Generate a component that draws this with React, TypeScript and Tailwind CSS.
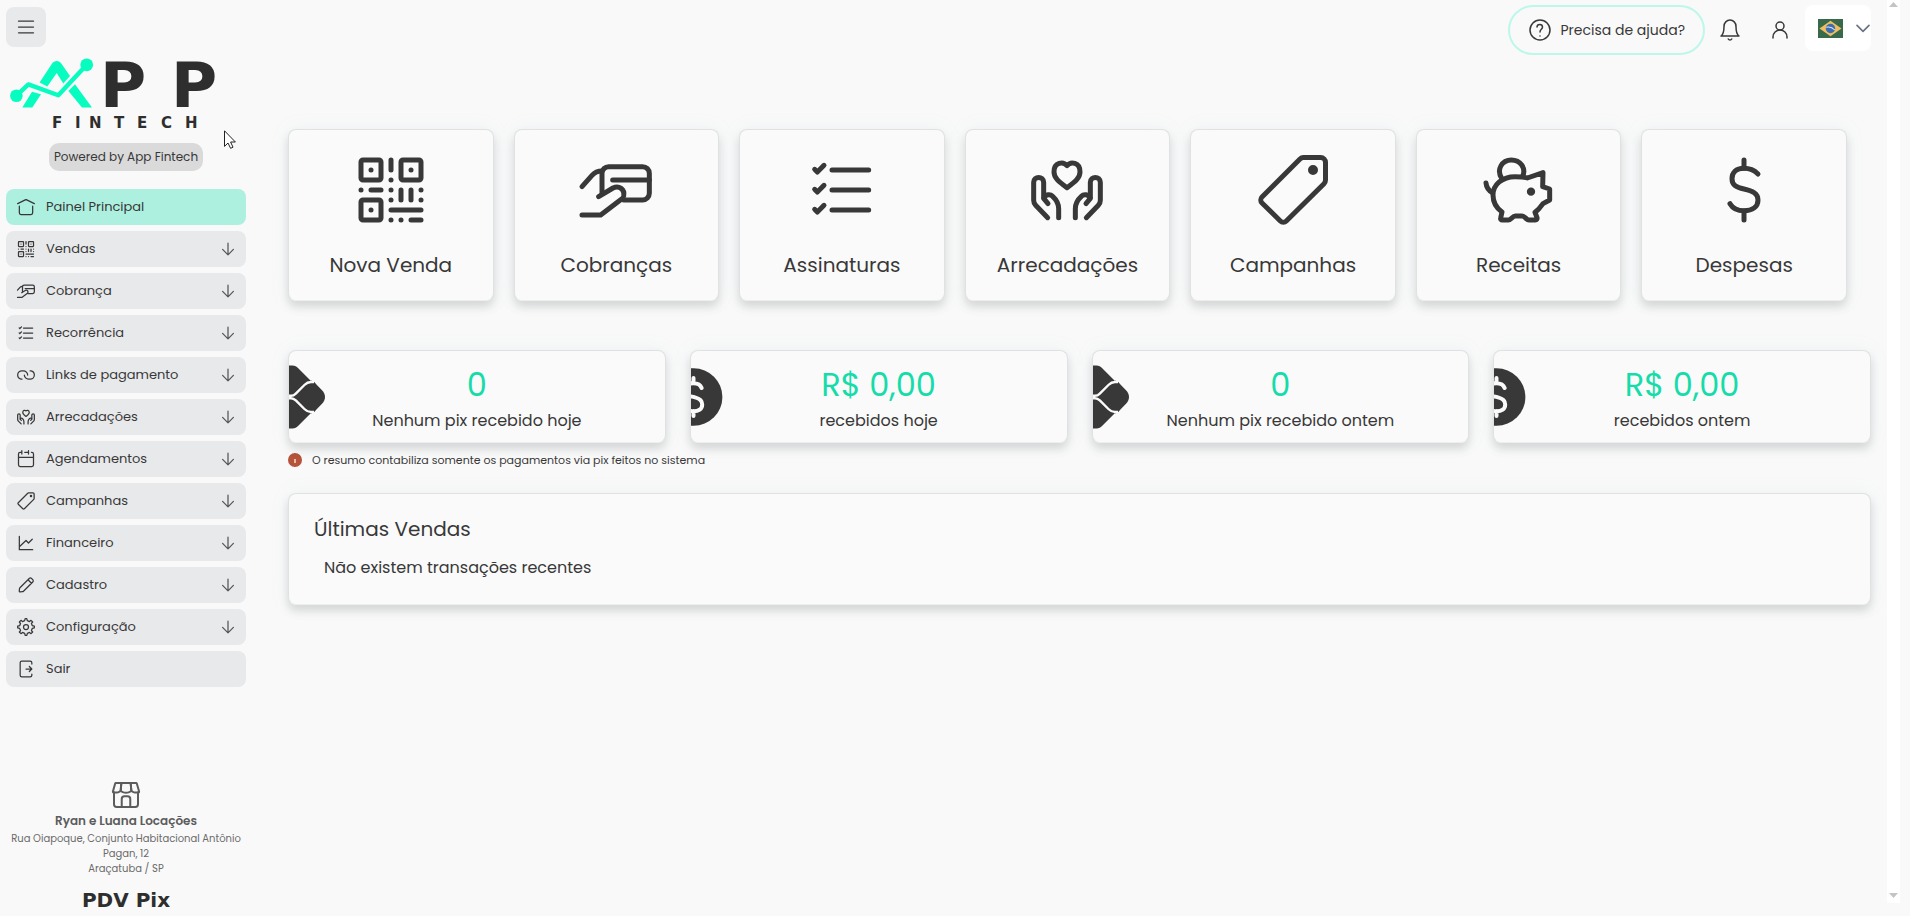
import type { ReactNode } from "react";

type IconProps = { className?: string };

function Svg({ className = "size-5", children }: IconProps & { children: ReactNode }) {
  return (
    <svg
      viewBox="0 0 24 24"
      fill="none"
      stroke="currentColor"
      strokeWidth="1.5"
      strokeLinecap="round"
      strokeLinejoin="round"
      aria-hidden="true"
      className={`shrink-0 ${className}`}
    >
      {children}
    </svg>
  );
}

const HomeIcon = ({ className }: IconProps) => (
  <Svg className={className}>
    <path d="M2 8L11.73 3.13C11.9 3.05 12.1 3.05 12.27 3.13L22 8" />
    <path d="M20 11V19C20 20.1 19.1 21 18 21H6C4.9 21 4 20.1 4 19V11" />
  </Svg>
);

const QrIcon = ({ className }: IconProps) => (
  <Svg className={className}>
    <rect x="3" y="3" width="6" height="6" rx="0.6" />
    <rect x="15" y="3" width="6" height="6" rx="0.6" />
    <rect x="3" y="15" width="6" height="6" rx="0.6" />
    <path d="M12 3V6M6 12H9M15 12V15M18 12V15M12 18H21M18 21H21" />
    <path d="M6 6H6.01M18 6H18.01M6 18H6.01M12 9H12.01M3 12H3.01M12 12H12.01M21 12H21.01M12 15H12.01M21 15H21.01M12 21H12.01M15 21H15.01" />
  </Svg>
);

const HandCardIcon = ({ className }: IconProps) => (
  <Svg className={className}>
    <path d="M1.8 11L4.8 7.6C5.6 6.7 6.6 6.3 7.8 6.3" />
    <path d="M7.8 13V7C7.8 5.9 8.7 5 9.8 5H20C21.1 5 22 5.9 22 7V13C22 14.1 21.1 15 20 15H14.3" />
    <path d="M11 9H22" />
    <path d="M6.8 14L11.1 11.4C12.9 10.5 14.7 11.8 14.3 13.8C14.2 14.2 14 14.5 13.7 14.7L7.4 19.5H1.8" />
  </Svg>
);

const ListCheckIcon = ({ className }: IconProps) => (
  <Svg className={className}>
    <path d="M9 6H20M9 12H20M9 18H20" />
    <path d="M3.8 5.8L4.6 6.6L6.6 4.6M3.8 11.8L4.6 12.6L6.6 10.6M3.8 17.8L4.6 18.6L6.6 16.6" />
  </Svg>
);

const LinkIcon = ({ className }: IconProps) => (
  <Svg className={className}>
    <path d="M14 12C14 9.5 11.68 7 8.86 7H7.14C4.3 7 2 9.24 2 12C2 14.38 3.71 16.37 6 16.87C6.37 16.95 6.75 17 7.14 17" />
    <path d="M10 12C10 14.49 12.32 17 15.14 17H16.86C19.7 17 22 14.76 22 12C22 9.62 20.29 7.63 18 7.12C17.63 7.04 17.25 7 16.86 7" />
  </Svg>
);

const DonateIcon = ({ className }: IconProps) => (
  <Svg className={className}>
    <path d="M12 4.7C10.9 3.4 8.1 3.6 8.1 6.6C8.1 8.3 9.4 9.4 12 11.3C14.6 9.4 15.9 8.3 15.9 6.6C15.9 3.6 13.1 3.4 12 4.7Z" />
    <path d="M6.2 20.3L2.6 16.6C2.2 16.2 2 15.8 2 15.1V9.7C2 7.8 5 7.8 5 9.7V14.5L6.3 16.1" />
    <path d="M5.1 14.4C5.7 13.3 6.9 13.1 7.7 13.9C9 15.1 9.5 16.2 9.5 17.6V20.3" />
    <path d="M17.8 20.3L21.4 16.6C21.8 16.2 22 15.8 22 15.1V9.7C22 7.8 19 7.8 19 9.7V14.5L17.7 16.1" />
    <path d="M18.9 14.4C18.3 13.3 17.1 13.1 16.3 13.9C15 15.1 14.5 16.2 14.5 17.6V20.3" />
  </Svg>
);

const CalendarIcon = ({ className }: IconProps) => (
  <Svg className={className}>
    <path d="M15 2V6M15 4H10.5M3 10V19C3 20.1 3.9 21 5 21H19C20.1 21 21 20.1 21 19V10H3Z" />
    <path d="M3 10V6C3 4.9 3.9 4 5 4H7M7 2V6M21 10V6C21 4.9 20.1 4 19 4H18.5" />
  </Svg>
);

const TagIcon = ({ className }: IconProps) => (
  <Svg className={className}>
    <path d="M2.7 14.1L14.1 2.7C14.4 2.4 14.7 2.25 15.1 2.25H20.3C21.1 2.25 21.75 2.9 21.75 3.7V9C21.75 9.4 21.6 9.8 21.3 10.1L10 21.3C9.5 21.8 8.7 21.8 8.2 21.3L2.7 15.9C2.2 15.4 2.2 14.6 2.7 14.1Z" />
    <circle cx="18" cy="6" r="0.75" fill="currentColor" />
  </Svg>
);

const GraphIcon = ({ className }: IconProps) => (
  <Svg className={className}>
    <path d="M20 20H4V4M4 16.5L12 9L15 12L19.5 7.5" />
  </Svg>
);

const PencilIcon = ({ className }: IconProps) => (
  <Svg className={className}>
    <path d="M14.36 5.65L15.84 4.17C16.62 3.39 17.89 3.39 18.67 4.17L20.09 5.59C20.87 6.37 20.87 7.63 20.09 8.41L18.61 9.89M14.36 5.65L4.75 15.27C4.42 15.6 4.21 16.04 4.17 16.51L3.93 19.25C3.87 19.87 4.39 20.38 5.01 20.33L7.75 20.09C8.22 20.05 8.66 19.84 8.99 19.51L18.61 9.89M14.36 5.65L18.61 9.89" />
  </Svg>
);

const GearIcon = ({ className }: IconProps) => (
  <Svg className={className}>
    <circle cx="12" cy="12" r="3" />
    <path d="M19.62 10.4L18.52 7.74L20 6L18 4L16.26 5.48L13.56 4.37L12.94 2H10.98L10.35 4.4L7.7 5.52L6 4L4 6L5.45 7.79L4.37 10.45L2 11V13L4.4 13.66L5.52 16.3L4 18L6 20L7.79 18.54L10.4 19.61L11 22H13L13.6 19.61L16.26 18.52C16.7 18.83 18 20 18 20L20 18L18.52 16.25L19.61 13.6L22 12.98V11L19.62 10.4Z" />
  </Svg>
);

const ExitIcon = ({ className }: IconProps) => (
  <Svg className={className}>
    <path d="M19 6V4.5C19 3.4 18.1 2.5 17 2.5H7C5.9 2.5 5 3.4 5 4.5V19.5C5 20.6 5.9 21.5 7 21.5H17C18.1 21.5 19 20.6 19 19.5V18" />
    <path d="M12 12H19M16 9L19 12L16 15" />
  </Svg>
);

const PigIcon = ({ className }: IconProps) => (
  <Svg className={className}>
    <path d="M6.9 8.7C5 5.8 7 3 9.7 3C12.4 3 14.2 5.4 13.1 7.9" />
    <path d="M14.5 8.4L19.2 6.8L19.1 11L21.2 11.7V15L19.2 16.1C18.5 17.1 17.8 18 16.8 18.7L17.4 20.3C17.5 20.7 17.3 21 16.9 21H15C14.2 21 13.8 19.8 12.9 19.8H10.9C10 19.8 9.7 21 8.8 21H7C6.6 21 6.4 20.7 6.5 20.4L6.9 18.6C5.2 17.4 4.2 15.7 4.2 13.5C4.2 10.4 7 8 10.8 8C12.2 8 13.3 8 14.5 8.4Z" />
    <path d="M2.1 9.9C2.2 11 2.7 12 4 12.8" />
    <circle cx="15.6" cy="12.5" r="0.5" fill="currentColor" />
  </Svg>
);

const DollarIcon = ({ className }: IconProps) => (
  <Svg className={className}>
    <path d="M16.2 7.2C15.2 6.2 13.8 5.5 12 5.5C9.5 5.5 8.4 6.9 8.4 8.6C8.4 10.6 9.8 11.2 12 11.7C14.6 12.3 16.2 13 16.2 15C16.2 17 14.6 18.2 12 18.2C10 18.2 8.6 17.5 7.8 16.1" />
    <path d="M12 3V5.5M12 18.3V21" />
  </Svg>
);

const ShopIcon = ({ className }: IconProps) => (
  <Svg className={className}>
    <path d="M3 10V19C3 20.1 3.9 21 5 21H19C20.1 21 21 20.1 21 19V10" />
    <path d="M15.2 21V15C15.2 13.9 14.3 13 13.2 13H10.8C9.7 13 8.8 13.9 8.8 15V21" />
    <path d="M21.82 9.36L20.12 3.44C20.05 3.18 19.82 3 19.55 3H15.5L15.98 8.7C15.99 8.89 16.09 9.06 16.25 9.15C16.64 9.39 17.41 9.82 18 10C19.02 10.31 20.5 10.2 21.35 10.1C21.7 10.05 21.92 9.7 21.82 9.36Z" />
    <path d="M14 10C14.57 9.83 15.29 9.43 15.69 9.19C15.88 9.07 15.99 8.86 15.97 8.64L15.5 3H8.5L8.03 8.64C8.01 8.86 8.12 9.07 8.31 9.19C8.71 9.43 9.43 9.83 10 10C11.49 10.46 12.51 10.46 14 10Z" />
    <path d="M3.88 3.44L2.18 9.36C2.08 9.7 2.3 10.05 2.65 10.1C3.5 10.2 4.98 10.31 6 10C6.59 9.82 7.36 9.39 7.75 9.15C7.91 9.06 8.01 8.89 8.02 8.7L8.5 3H4.45C4.18 3 3.95 3.18 3.88 3.44Z" />
  </Svg>
);

const ArrowDownIcon = ({ className }: IconProps) => (
  <Svg className={className}>
    <path d="M12 5V19M5.5 12.5L12 19L18.5 12.5" />
  </Svg>
);

function Logo() {
  return (
    <svg
      viewBox="0 0 232 72"
      role="img"
      aria-label="APP Fintech"
      className="mx-1 h-[72px] overflow-visible font-['DejaVu_Sans',sans-serif]"
    >
      <g fill="#07fdc0">
        <circle cx="6.4" cy="37.7" r="6.3" />
        <circle cx="76.7" cy="6.8" r="6.4" />
        <path d="M29.6 24.5L41.6 6.2C44.4 2 49 2 51.8 6.2L60 18L53.3 25.4L46.7 15L37.3 28.4Z" />
        <path d="M22 33.7L31 36.3L22.3 49.5H12.3Z" />
        <path d="M58.4 33L65 26.2L82 49.5H72Z" />
        <path
          d="M6.4 37.7L18.4 26.4L48.3 37.3L76.7 6.8"
          fill="none"
          stroke="#07fdc0"
          strokeWidth="4.4"
          strokeLinejoin="round"
        />
      </g>
      <text x="90 161" y="49" fontSize="63" fontWeight="700" fill="#2e2e2e">
        PP
      </text>
      <text x="42 65 79 104 127 151 175" y="70" fontSize="15" fontWeight="700" fill="#2e2e2e">
        FINTECH
      </text>
    </svg>
  );
}

function PixMark() {
  return (
    <svg viewBox="0 0 36 64" aria-hidden="true" className="h-16 w-9">
      <path
        d="M0 0.5H3.5C6 0.5 7.6 1.5 9 2.9L22 16H24.5L32.4 27.4C35.6 30.6 35.6 33.4 32.4 36.6L24.5 48H22L9 61.1C7.6 62.5 6 63.5 3.5 63.5H0Z"
        fill="#383838"
      />
      <path d="M22 15.2L23.4 16.6C24.4 16.8 25.3 17.4 26 18.1L33 25.2C37 29.4 37 34.6 33 38.8L26 45.9C25.3 46.6 24.4 47.2 23.4 47.4L22 48.8Z" fill="#383838" />
      <path
        d="M0 30.8H2C4.2 30.8 5.4 30 6.8 28.6L15.4 20C17.6 17.8 19 17 22 17H25M0 33.2H2C4.2 33.2 5.4 34 6.8 35.4L15.4 44C17.6 46.2 19 47 22 47H25"
        fill="none"
        stroke="#fafafa"
        strokeWidth="2.4"
      />
    </svg>
  );
}

function CoinMark() {
  return (
    <svg viewBox="0 0 36 64" aria-hidden="true" className="h-16 w-9">
      <circle cx="2.6" cy="32" r="28.8" fill="#383838" />
      <path
        d="M10.6 23C9.4 19.4 6.4 18.2 2.5 18.2C-3 18.2-6 20.5-6 24.5C-6 33-1 30.5 4 32.4C8.8 33.6 11.2 35.4 11.2 39.4C11.2 44 7.6 46.2 2.5 46.2C-2 46.2-6 44-6 40M2.5 13V18M2.5 46V51"
        fill="none"
        stroke="#fafafa"
        strokeWidth="4"
        strokeLinecap="round"
      />
    </svg>
  );
}

function BrazilFlag() {
  return (
    <svg viewBox="0 0 25 19" aria-hidden="true" className="h-[19px] w-[25px]">
      <rect width="25" height="19" fill="#37694a" />
      <path d="M12.5 1.8L23.5 9.5L12.5 17.2L1.5 9.5Z" fill="#f0bd62" />
      <circle cx="12.5" cy="9.5" r="4.7" fill="#3c6db0" />
      <path d="M8.2 8.2C11.2 7.5 14.6 8.6 16.8 11" fill="none" stroke="#dfe8f0" strokeWidth="1.1" />
    </svg>
  );
}

const menu = [
  { label: "Painel Principal", icon: HomeIcon, active: true, expandable: false },
  { label: "Vendas", icon: QrIcon, expandable: true },
  { label: "Cobrança", icon: HandCardIcon, expandable: true },
  { label: "Recorrência", icon: ListCheckIcon, expandable: true },
  { label: "Links de pagamento", icon: LinkIcon, expandable: true },
  { label: "Arrecadações", icon: DonateIcon, expandable: true },
  { label: "Agendamentos", icon: CalendarIcon, expandable: true },
  { label: "Campanhas", icon: TagIcon, expandable: true },
  { label: "Financeiro", icon: GraphIcon, expandable: true },
  { label: "Cadastro", icon: PencilIcon, expandable: true },
  { label: "Configuração", icon: GearIcon, expandable: true },
  { label: "Sair", icon: ExitIcon, expandable: false },
];

const shortcuts = [
  { label: "Nova Venda", icon: QrIcon },
  { label: "Cobranças", icon: HandCardIcon },
  { label: "Assinaturas", icon: ListCheckIcon },
  { label: "Arrecadações", icon: DonateIcon },
  { label: "Campanhas", icon: TagIcon },
  { label: "Receitas", icon: PigIcon },
  { label: "Despesas", icon: DollarIcon },
];

const stats = [
  { value: "0", label: "Nenhum pix recebido hoje", mark: PixMark },
  { value: "R$ 0,00", label: "recebidos hoje", mark: CoinMark },
  { value: "0", label: "Nenhum pix recebido ontem", mark: PixMark },
  { value: "R$ 0,00", label: "recebidos ontem", mark: CoinMark },
];

function Sidebar() {
  return (
    <aside className="flex w-[246px] shrink-0 flex-col pt-[7px] pl-[6px]">
      <button
        type="button"
        aria-label="Menu"
        className="flex size-10 items-center justify-center rounded-lg bg-[#e8e9eb]"
      >
        <Svg>
          <path d="M3 5H21M3 12H21M3 19H21" />
        </Svg>
      </button>

      <div className="mt-[11px] flex flex-col items-center">
        <Logo />
        <p className="mt-[13px] rounded-[10px] bg-[#dadada] px-[5px] text-xs leading-7">
          Powered by App Fintech
        </p>
      </div>

      <nav className="mt-[18px] flex flex-col gap-1.5">
        {menu.map(({ label, icon: Icon, active, expandable }) => (
          <a
            key={label}
            href="#"
            className={`flex h-9 items-center rounded-lg pr-2 pl-2.5 text-[13px] ${
              active ? "bg-[#adf0df]" : "bg-[#e8e9eb]"
            }`}
          >
            <Icon />
            <span className="ml-2.5 flex-1">{label}</span>
            {expandable && <ArrowDownIcon className="size-5 text-[#555]" />}
          </a>
        ))}
      </nav>

      <div className="mt-auto flex flex-col items-center pb-1 text-center text-[#5c5c5c]">
        <ShopIcon className="size-8" />
        <p className="text-xs leading-5 font-semibold">Ryan e Luana Locações</p>
        <address className="text-[10px] leading-[15px] text-[#6a6a6a] not-italic">
          Rua Oiapoque, Conjunto Habitacional Antônio Pagan, 12
          <br />
          Araçatuba / SP
        </address>
        <p className="mt-3 font-['DejaVu_Sans',sans-serif] text-xl leading-6 font-bold text-[#2e2e2e]">
          PDV Pix
        </p>
      </div>
    </aside>
  );
}

function Header() {
  return (
    <header className="flex justify-end pt-[5px]">
      <button
        type="button"
        className="flex h-[50px] items-center gap-2 rounded-full border-2 border-[#bdf7ea] px-[18px] text-sm"
      >
        <Svg className="size-6">
          <circle cx="12" cy="12" r="10" />
          <path d="M9 9C9 5.5 14.5 5.5 14.5 9C14.5 11.5 12 11 12 14M12 18H12.01" />
        </Svg>
        Precisa de ajuda?
      </button>
      <button type="button" aria-label="Notificações" className="flex w-[50px] items-center justify-center">
        <Svg className="size-6">
          <path d="M18 8.4C18 6.7 17.37 5.07 16.24 3.87C15.12 2.67 13.59 2 12 2C10.41 2 8.88 2.67 7.76 3.87C6.63 5.07 6 6.7 6 8.4C6 15.87 3 18 3 18H21C21 18 18 15.87 18 8.4Z" />
          <path d="M13.73 21C13 22.3 11 22.3 10.27 21" />
        </Svg>
      </button>
      <button type="button" aria-label="Perfil" className="flex w-[50px] items-center justify-center">
        <Svg className="size-6">
          <path d="M5 20V19C5 15.13 8.13 12 12 12C15.87 12 19 15.13 19 19V20" />
          <circle cx="12" cy="8" r="4" />
        </Svg>
      </button>
      <button
        type="button"
        aria-label="Idioma"
        className="flex h-[46px] w-[66px] items-center justify-between rounded-lg bg-white pl-[13px] text-[#6b7280]"
      >
        <BrazilFlag />
        <Svg className="size-4">
          <path d="M3 8L12 17L21 8" strokeWidth="2.5" />
        </Svg>
      </button>
    </header>
  );
}

const card =
  "rounded-lg border border-[#e0e2e2] border-b-[#eeeeee] bg-[#fafafa] shadow-[0_6px_10px_rgba(0,0,0,0.13),0_0_20px_rgba(120,160,190,0.08)]";

export default function App() {
  return (
    <div className="relative flex min-h-screen bg-[#f9f9f9] font-['Poppins','Inter',sans-serif] text-[#383838]">
      <Sidebar />

      <main className="min-w-0 flex-1 pr-4 pl-[42px]">
        <Header />

        <section className="mt-[74px] mr-6 grid grid-cols-7 gap-5">
          {shortcuts.map(({ label, icon: Icon }) => (
            <a
              key={label}
              href="#"
              className={`flex flex-col items-center gap-5 py-5 ${card}`}
            >
              <Icon className="size-20" />
              <span className="text-xl leading-[30px]">{label}</span>
            </a>
          ))}
        </section>

        <section className="mt-[49px] grid grid-cols-4 gap-6">
          {stats.map(({ value, label, mark: Mark }) => (
            <div key={label} className={`relative overflow-hidden pt-2.5 pb-[9px] text-center ${card}`}>
              <div className="absolute inset-y-0 left-0 flex items-center">
                <Mark />
              </div>
              <p className="text-[32px] leading-[48px] text-[#16dcaa]">{value}</p>
              <p className="text-base leading-6">{label}</p>
            </div>
          ))}
        </section>

        <p className="mt-2 flex items-center gap-2.5 text-[11px] leading-[18px]">
          <svg viewBox="0 0 14 14" aria-hidden="true" className="size-3.5">
            <circle cx="7" cy="7" r="7" fill="#b5533c" />
            <path d="M7 6V10" stroke="#f1d9b0" strokeWidth="1.6" />
          </svg>
          O resumo contabiliza somente os pagamentos via pix feitos no sistema
        </p>

        <section className={`mt-6 px-[25px] pt-5 pb-6 ${card}`}>
          <h2 className="text-xl leading-[30px]">Últimas Vendas</h2>
          <p className="mt-3 pl-2.5 text-base leading-6">Não existem transações recentes</p>
        </section>
      </main>

      <div
        aria-hidden="true"
        className="mr-2.5 mb-[13px] flex w-[13px] flex-col items-center justify-between bg-white pt-0.5 pb-[5px]"
      >
        <svg viewBox="0 0 9 5" className="h-[5px] w-[9px]">
          <path d="M0 5L4.5 0L9 5Z" fill="#c4c4c4" />
        </svg>
        <svg viewBox="0 0 9 5" className="h-[5px] w-[9px]">
          <path d="M0 0L4.5 5L9 0Z" fill="#c4c4c4" />
        </svg>
      </div>

      <svg
        viewBox="0 0 12 19"
        aria-hidden="true"
        className="pointer-events-none absolute top-[130px] left-[224px] h-[19px] w-3"
      >
        <path
          d="M0.5 0.8V16.4L4 13L6.6 18.3L9 17.2L6.6 12H11.4Z"
          fill="#fff"
          stroke="#222"
          strokeWidth="1"
        />
      </svg>
    </div>
  );
}
